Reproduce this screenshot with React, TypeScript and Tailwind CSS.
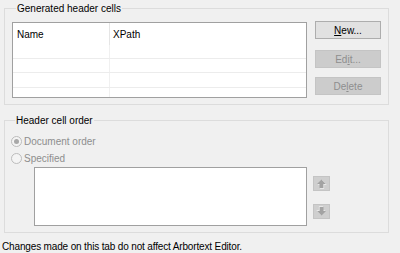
const font = "font-['Liberation_Sans',Arial,sans-serif]";

const Radio = ({ checked }: { checked?: boolean }) => (
  <span className="flex h-[11px] w-[11px] items-center justify-center rounded-full border border-[#bcbcbc] bg-[#f4f4f4]">
    {checked && <span className="h-[5px] w-[5px] rounded-full bg-[#a8a8a8]" />}
  </span>
);

const ArrowButton = ({ down }: { down?: boolean }) => (
  <div className="flex h-[15px] w-[17px] items-center justify-center border border-[#c4c4c4] bg-[#cfcfcf]">
    <svg width="11" height="11" viewBox="0 0 11 11">
      <g transform={down ? "rotate(180 5.5 5.5)" : undefined}>
        <path d="M5.5 1.5 L10 6 L7.5 6 L7.5 10 L3.5 10 L3.5 6 L1 6 Z" fill="#ffffff" transform="translate(0.6 0.6)" />
        <path d="M5.5 1.5 L10 6 L7.5 6 L7.5 10 L3.5 10 L3.5 6 L1 6 Z" fill="#a3a3a3" />
      </g>
    </svg>
  </div>
);

const Button = ({ children, disabled, className }: { children: React.ReactNode; disabled?: boolean; className?: string }) => (
  <div
    className={
      "flex h-[18px] w-[66px] items-center justify-center border text-[10px] " +
      (disabled ? "border-[#c4c4c4] bg-[#cccccc] text-[#8e8e8e] " : "border-[#adadad] bg-[#e1e1e1] text-black ") +
      (className ?? "")
    }
  >
    {children}
  </div>
);

export default function App() {
  return (
    <div className={`h-[253px] w-[400px] overflow-hidden bg-[#f0f0f0] text-[10px] leading-[13px] text-black ${font}`}>
      <fieldset className="ml-[4px] mt-[2px] h-[103px] w-[385px] border border-[#dcdcdc] pl-[7px]">
        <legend className="ml-[4px] px-[1px]">Generated header cells</legend>
        <div className="mt-[7px] flex items-start">
          <div className="h-[76px] w-[295px] border border-[#a0a0a0] bg-white">
            <div className="flex h-[22px]">
              <div className="flex w-[97px] items-center border-r border-[#e5e5e5] pl-[4px] pt-[1px]">Name</div>
              <div className="flex items-center pl-[3px] pt-[1px]">XPath</div>
            </div>
            {[13, 14, 15, 10].map((h, i) => (
              <div key={i} className={"flex " + (i > 0 ? "border-t border-[#ececec]" : "")} style={{ height: h }}>
                <div className="w-[97px] border-r border-[#f0f0f0]" />
              </div>
            ))}
          </div>
          <div className="-mt-[1px] ml-[8px] flex flex-col">
            <Button>
              <span>
                <span className="underline">N</span>ew...
              </span>
            </Button>
            <Button disabled className="mt-[11px]">
              <span>
                Ed<span className="underline">i</span>t...
              </span>
            </Button>
            <Button disabled className="mt-[9px]">
              <span>
                De<span className="underline">l</span>ete
              </span>
            </Button>
          </div>
        </div>
      </fieldset>

      <fieldset className="ml-[4px] mt-[9px] h-[119px] w-[385px] border border-[#dcdcdc] pl-[6px]">
        <legend className="ml-[4px] px-[1px]">Header cell order</legend>
        <div className="mt-[5px] flex flex-col text-[#8e8e8e]">
          <div className="flex h-[18px] items-center gap-[2px]">
            <Radio checked />
            <span>Document order</span>
          </div>
          <div className="flex h-[17px] items-center gap-[2px]">
            <Radio />
            <span>Specified</span>
          </div>
        </div>
        <div className="flex items-start">
          <div className="ml-[23px] h-[59px] w-[273px] border border-[#a0a0a0] bg-white" />
          <div className="ml-[6px] mt-[9px] flex flex-col gap-[13px]">
            <ArrowButton />
            <ArrowButton down />
          </div>
        </div>
      </fieldset>

      <div className="ml-[2px] mt-[8px] leading-[12px] tracking-[-0.15px]">
        Changes made on this tab do not affect Arbortext Editor.
      </div>
    </div>
  );
}
